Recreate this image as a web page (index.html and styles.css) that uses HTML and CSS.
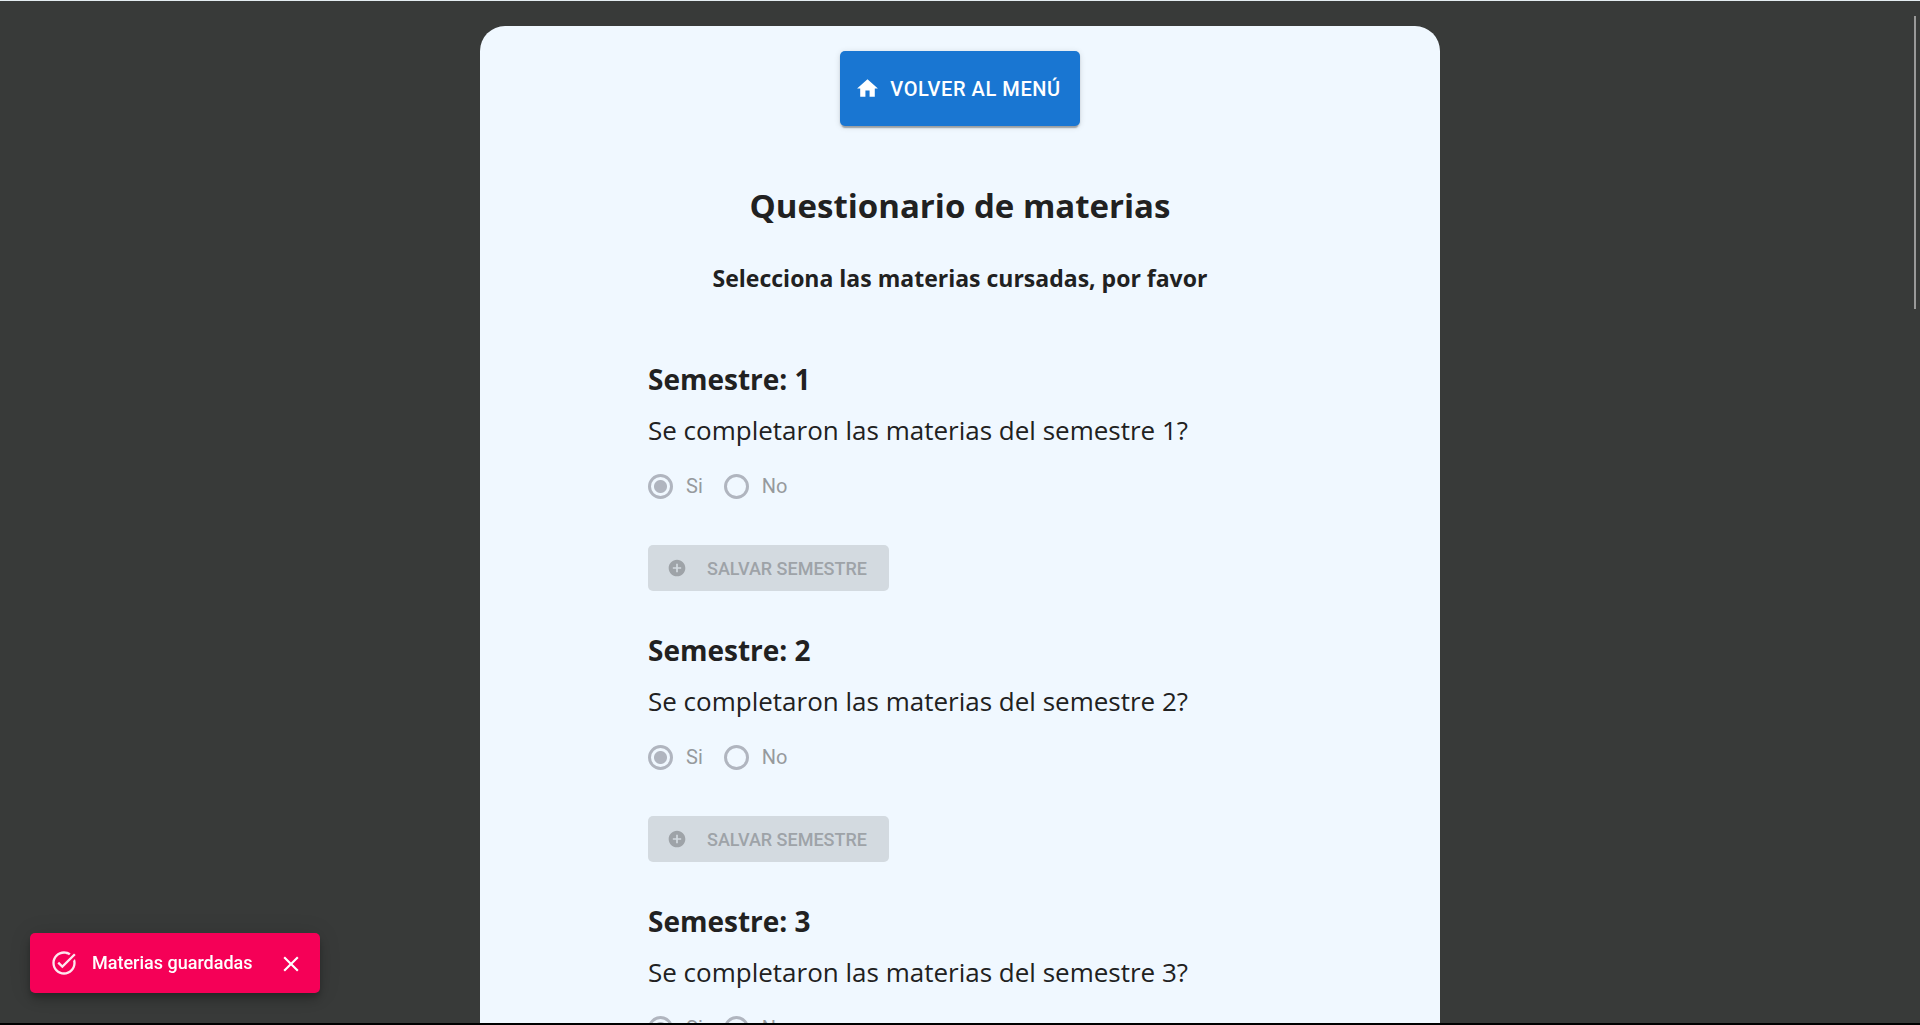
FILE: index.html
```html
<!DOCTYPE html>
<html lang="es">
<head>
<meta charset="utf-8">
<meta name="viewport" content="width=device-width, initial-scale=1">
<title>Questionario de materias</title>
<link rel="stylesheet" href="styles.css">
</head>
<body>
<svg class="sprite" aria-hidden="true">
  <symbol id="icon-home" viewBox="0 0 24 24"><path d="M10 20v-6h4v6h5v-8h3L12 3 2 12h3v8z"/></symbol>
  <symbol id="icon-add" viewBox="0 0 24 24"><path d="M12 2C6.480 2 2 6.480 2 12s4.480 10 10 10 10-4.480 10-10S17.520 2 12 2zm5 11h-4v4h-2v-4H7v-2h4V7h2v4h4v2z"/></symbol>
  <symbol id="icon-done" viewBox="0 0 24 24"><path d="M22 5.180 10.590 16.600l-4.240-4.240 1.410-1.410 2.830 2.830 10-10L22 5.180zm-2.210 5.040c.13.570.21 1.170.21 1.780 0 4.420-3.580 8-8 8s-8-3.580-8-8 3.580-8 8-8c1.580 0 3.040.46 4.280 1.250l1.440-1.440C16.100 2.670 14.130 2 12 2 6.480 2 2 6.480 2 12s4.480 10 10 10 10-4.480 10-10c0-1.190-.22-2.330-.6-3.390l-1.610 1.610z"/></symbol>
  <symbol id="icon-close" viewBox="0 0 24 24"><path d="M19 6.410 17.590 5 12 10.590 6.410 5 5 6.410 10.590 12 5 17.590 6.410 19 12 13.410 17.590 19 19 17.590 13.410 12z"/></symbol>
</svg>

<div class="viewport">
  <main class="card">
    <button class="button button-primary" type="button">
      <svg class="icon-home" aria-hidden="true"><use href="#icon-home"/></svg>
      Volver al menú
    </button>
    <h1 class="title">Questionario de materias</h1>
    <h2 class="subtitle">Selecciona las materias cursadas, por favor</h2>

    <form class="semesters">
      <fieldset class="semester">
        <legend class="semester-name">Semestre: 1</legend>
        <p class="question">Se completaron las materias del semestre 1?</p>
        <div class="options">
          <label class="option"><input class="radio" type="radio" name="semestre-1" checked disabled>Si</label>
          <label class="option"><input class="radio" type="radio" name="semestre-1" disabled>No</label>
        </div>
        <button class="button button-save" type="button" disabled>
          <svg class="icon-add" aria-hidden="true"><use href="#icon-add"/></svg>
          Salvar semestre
        </button>
      </fieldset>
      <fieldset class="semester">
        <legend class="semester-name">Semestre: 2</legend>
        <p class="question">Se completaron las materias del semestre 2?</p>
        <div class="options">
          <label class="option"><input class="radio" type="radio" name="semestre-2" checked disabled>Si</label>
          <label class="option"><input class="radio" type="radio" name="semestre-2" disabled>No</label>
        </div>
        <button class="button button-save" type="button" disabled>
          <svg class="icon-add" aria-hidden="true"><use href="#icon-add"/></svg>
          Salvar semestre
        </button>
      </fieldset>
      <fieldset class="semester">
        <legend class="semester-name">Semestre: 3</legend>
        <p class="question">Se completaron las materias del semestre 3?</p>
        <div class="options">
          <label class="option"><input class="radio" type="radio" name="semestre-3" checked disabled>Si</label>
          <label class="option"><input class="radio" type="radio" name="semestre-3" disabled>No</label>
        </div>
      </fieldset>
    </form>
  </main>
</div>

<div class="scroll-thumb" aria-hidden="true"></div>

<div class="toast" role="alert">
  <svg class="icon-done" aria-hidden="true"><use href="#icon-done"/></svg>
  <span class="toast-text">Materias guardadas</span>
  <button class="toast-close" type="button" aria-label="Cerrar">
    <svg class="icon-close" aria-hidden="true"><use href="#icon-close"/></svg>
  </button>
</div>
</body>
</html>
```
FILE: styles.css
```css
* {
  box-sizing: border-box;
}

body {
  margin: 0;
  height: 100vh;
  overflow: hidden;
  border-top: 1px solid #e4edf2;
  border-bottom: 2px solid #000;
  background: #383a39;
  color: #212121;
  font-family: "Segoe UI", "Open Sans", "Noto Sans", sans-serif;
}

svg {
  display: block;
  flex: none;
  fill: currentColor;
}

.sprite {
  position: absolute;
  width: 0;
  height: 0;
}

.viewport {
  height: 100%;
  overflow: hidden;
  padding-top: 25px;
}

.card {
  display: flex;
  flex-direction: column;
  align-items: center;
  width: 50%;
  min-width: 600px;
  min-height: 100%;
  margin: 0 auto;
  padding: 25px 0;
  border-radius: 25px;
  background: #f0f8ff;
}

.button {
  display: flex;
  align-items: center;
  border: 0;
  border-radius: 5px;
  font-family: Roboto, sans-serif;
  font-weight: 500;
  text-transform: uppercase;
  white-space: nowrap;
}

.button-primary {
  justify-content: center;
  gap: 10px;
  width: 240px;
  height: 75px;
  padding: 0 10px 0 6px;
  background: #1976d2;
  color: #fff;
  font-size: 20px;
  letter-spacing: 0.02857em;
  box-shadow: 0 4px 1px -2px rgba(0, 0, 0, 0.2), 0 2px 2px rgba(0, 0, 0, 0.14), 0 1px 6px rgba(0, 0, 0, 0.12);
}

.icon-home {
  width: 25px;
  height: 25px;
}

.title,
.subtitle {
  margin: 0;
  text-align: center;
  font-weight: 700;
}

.title {
  margin-top: 56px;
  font-size: 33px;
  line-height: 48px;
}

.subtitle {
  margin-top: 30px;
  font-size: 23px;
  line-height: 36px;
}

.semesters {
  align-self: stretch;
  margin-top: 63px;
  padding-left: 168px;
}

.semester {
  min-width: 0;
  margin: 0 0 39px;
  padding: 0;
  border: 0;
}

.semester-name {
  padding: 0;
  font-size: 28px;
  font-weight: 700;
  line-height: 40px;
}

.question {
  margin: 11px 0 0;
  font-size: 26px;
  line-height: 40px;
}

.options {
  display: flex;
  gap: 21px;
  margin-top: 21px;
  color: #969a9d;
  font: 20px/30px Roboto, sans-serif;
}

.option {
  display: flex;
  align-items: center;
  gap: 13px;
}

.radio {
  appearance: none;
  width: 25px;
  height: 25px;
  margin: 0;
  border: 3px solid #b0b5bf;
  border-radius: 50%;
}

.radio:checked {
  background: radial-gradient(circle, #b0b5bf 6px, transparent 7px);
}

.button-save {
  gap: 20px;
  width: 241px;
  height: 46px;
  margin-top: 44px;
  padding: 0 19px;
  background: #d3dae0;
  color: #9ea3a8;
  font-size: 18px;
}

.icon-add {
  width: 20px;
  height: 20px;
}

.scroll-thumb {
  position: fixed;
  top: 16px;
  right: 4px;
  width: 2px;
  height: 293px;
  background: #999;
}

.toast {
  position: fixed;
  left: 30px;
  bottom: 32px;
  display: flex;
  align-items: center;
  width: 290px;
  height: 60px;
  padding: 0 16px 0 20px;
  border-radius: 5px;
  background: #f50057;
  color: #fff;
  font: 500 18px/26px Roboto, sans-serif;
  box-shadow: 0 4px 6px -1px rgba(0, 0, 0, 0.2), 0 8px 12px rgba(0, 0, 0, 0.14), 0 1px 22px rgba(0, 0, 0, 0.12);
}

.icon-done {
  width: 28px;
  height: 28px;
  opacity: 0.9;
}

.toast-text {
  flex: 1;
  margin-left: 14px;
}

.toast-close {
  padding: 2px 0 0;
  border: 0;
  background: none;
  color: inherit;
}

.icon-close {
  width: 26px;
  height: 26px;
}
```
